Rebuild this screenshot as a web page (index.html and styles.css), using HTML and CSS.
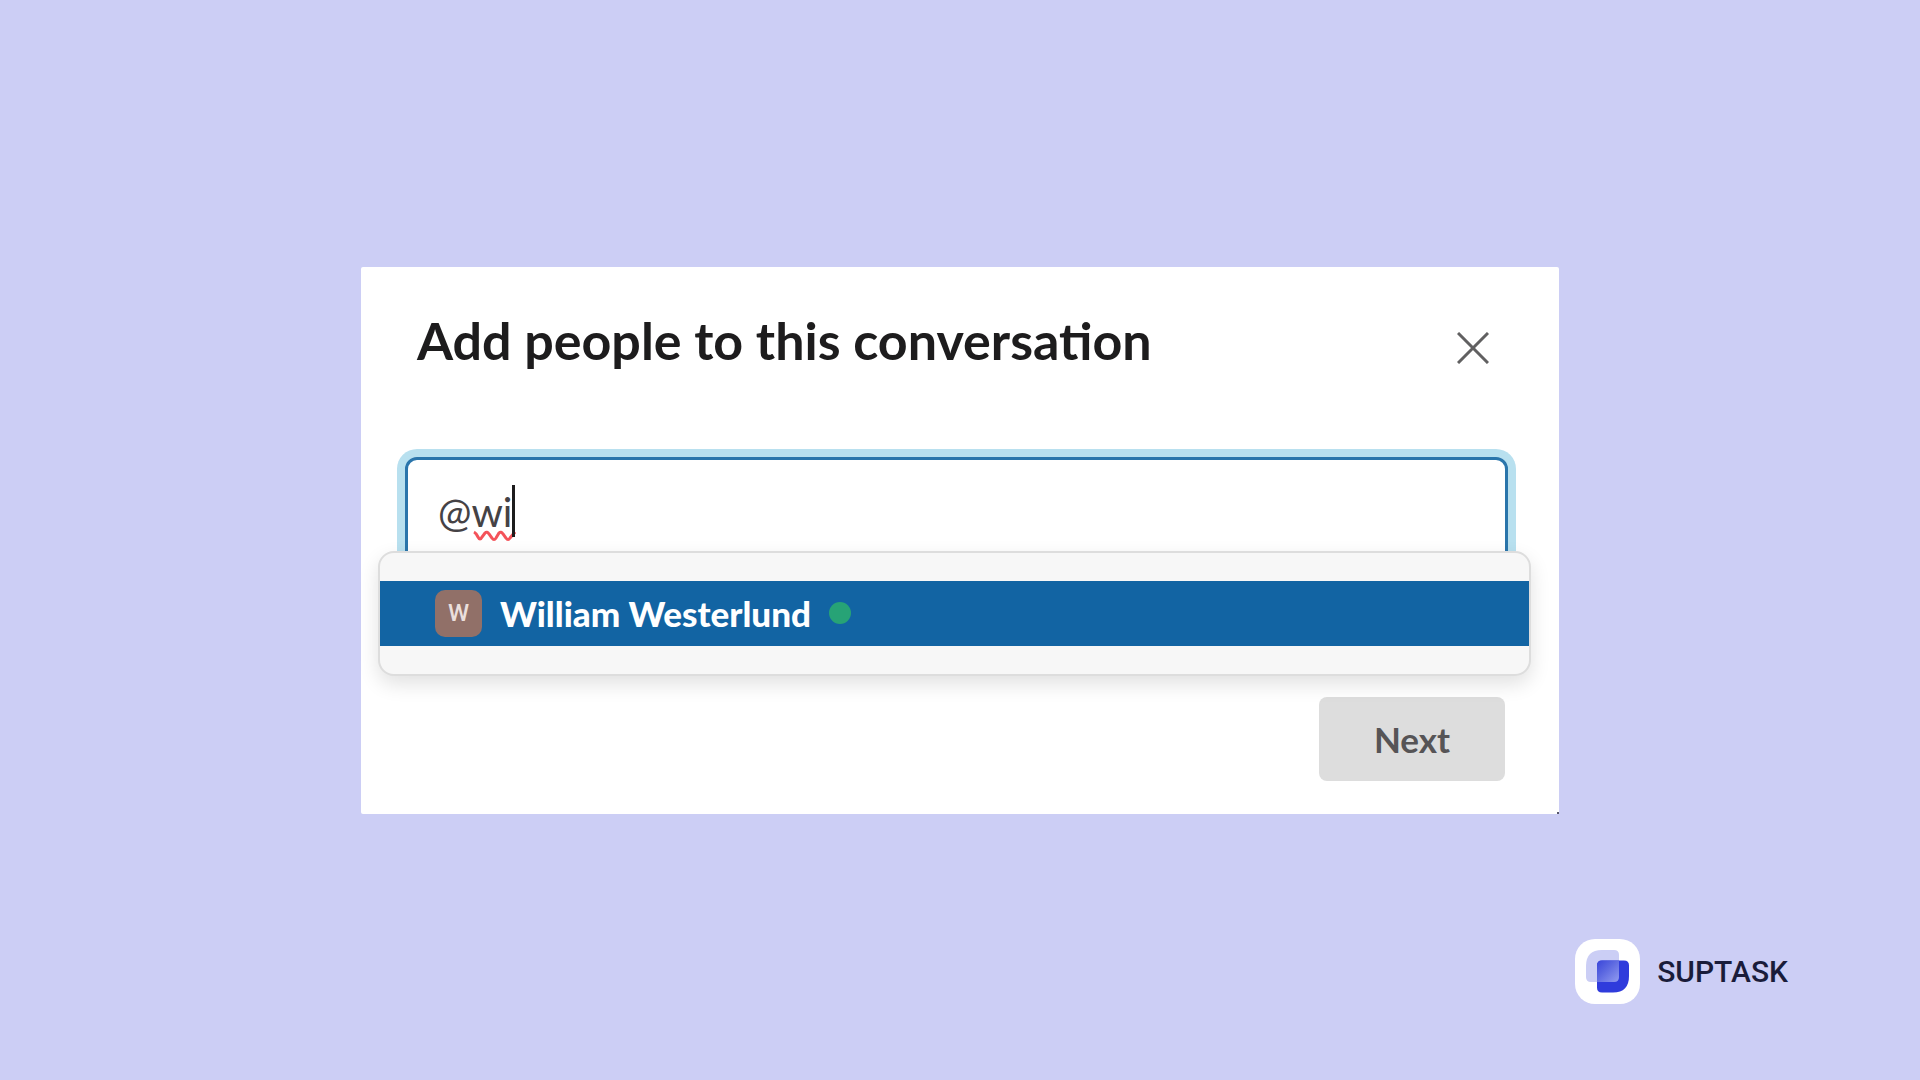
FILE: index.html
```html
<!DOCTYPE html>
<html lang="en">
<head>
  <meta charset="UTF-8" />
  <title>Add people to this conversation</title>
  <link rel="stylesheet" href="styles.css">
</head>
<body>
  <main class="dialog">
    <header class="dialog-header">
      <h1><label for="people">Add people to this conversation</label></h1>
      <button type="button" class="close-btn" aria-label="Close">
        <svg viewBox="0 0 32 32" width="32" height="32">
          <path d="M1 1 L31 31 M31 1 L1 31" />
        </svg>
      </button>
    </header>

    <div class="field">
      <input type="text" id="people" class="people-input" value="@wi" spellcheck="false" autocomplete="off" />
      <!-- spelling mark and text cursor -->
      <svg class="typo" viewBox="0 0 43 12" width="43" height="12">
        <path d="M1 2 Q3 3 5 7 Q7 11 9 7 L12 3 Q14 1 16 4 L19 8 Q21 11 23 8 L26 3 Q28 1 30 4 L33 8 Q35 11 37 8 L42 2" />
      </svg>
      <span class="cursor"></span>

      <ul class="suggestions">
        <li>
          <button type="button" class="person">
            <span class="avatar">W</span>
            <span class="name">William Westerlund</span>
            <span class="online"></span>
          </button>
        </li>
      </ul>
    </div>

    <div class="actions">
      <button type="button" class="next-btn">Next</button>
    </div>
  </main>

  <footer class="brand">
    <svg class="brand-logo" viewBox="0 0 65 65" width="65" height="65">
      <defs>
        <linearGradient id="glass" x1="0" y1="0" x2="1" y2="1">
          <stop offset="0" stop-color="#3a46da" />
          <stop offset="0.4" stop-color="#5a66e0" />
          <stop offset="1" stop-color="#929bf0" />
        </linearGradient>
      </defs>
      <rect width="65" height="65" rx="20" fill="#ffffff" />
      <path d="M27 11 H39 Q44 11 44 16 V43 H16 Q11 43 11 38 V27 Q11 11 27 11 Z" fill="#cbcef5" />
      <path d="M27 21.500 H49 Q54 21.500 54 26.500 V37 Q54 53.500 38 53.500 H27 Q22 53.500 22 48.500 V26.500 Q22 21.500 27 21.500 Z" fill="#2f3bdc" />
      <path d="M27 21.500 H44 V38 Q44 43 39 43 H22 V26.500 Q22 21.500 27 21.500 Z" fill="url(#glass)" />
    </svg>
    <span class="brand-name">SUPTASK</span>
  </footer>
</body>
</html>
```

FILE: styles.css
```css
* {
  box-sizing: border-box;
}

body {
  margin: 0;
  min-height: 100vh;
  display: grid;
  grid-template-rows: 1fr auto 1fr;
  justify-items: center;
  background: #cccef5;
  font-family: Lato, "Liberation Sans", sans-serif;
  color: #1d1c1d;
}

button {
  border: none;
  font-family: inherit;
  cursor: pointer;
}

/* Dialog */
.dialog {
  grid-row: 2;
  position: relative;
  width: 62.4%;
  padding: 43px 54px 33px 44px;
  background: #ffffff;
  border-radius: 2px;
}
.dialog::after {
  content: "";
  position: absolute;
  right: 0;
  bottom: 0;
  width: 2px;
  height: 2px;
  background: #55556a;
}

.dialog-header {
  display: flex;
  align-items: flex-end;
  justify-content: space-between;
  padding: 0 8px 0 12px;
  margin-bottom: 87px;
}
.dialog-header h1 {
  margin: 0;
  font-size: 52px;
  font-weight: bold;
  line-height: 60px;
}

.close-btn {
  display: flex;
  padding: 6px 8px;
  background: none;
}
.close-btn svg {
  fill: none;
  stroke: #616061;
  stroke-width: 3;
}

/* Text box with the list over its lower edge */
.field {
  position: relative;
  margin-right: -3px;
}

.people-input {
  display: block;
  width: 100%;
  height: 110px;
  padding: 0 30px;
  border: 3px solid #2a75ab;
  border-radius: 12px;
  outline: none;
  box-shadow: 0 0 0 8px #b8e0ef;
  background: #ffffff;
  font-family: inherit;
  font-size: 40px;
  color: #454245;
}

.typo {
  position: absolute;
  top: 73px;
  left: 68px;
  fill: none;
  stroke: #f4535a;
  stroke-width: 3;
}
.cursor {
  position: absolute;
  top: 28px;
  left: 107px;
  width: 3px;
  height: 52px;
  background: #1d1c1d;
}

.suggestions {
  position: absolute;
  top: 94px;
  left: -27px;
  right: -23px;
  margin: 0;
  padding: 28px 0;
  list-style: none;
  background: #f7f7f7;
  border: 2px solid #dddddd;
  border-radius: 16px;
  box-shadow: 0 8px 20px rgba(0, 0, 0, 0.12);
}

.person {
  display: flex;
  align-items: center;
  width: 100%;
  height: 65px;
  padding: 0 55px;
  background: #1264a3;
  color: #ffffff;
  font-size: 35px;
  font-weight: 900;
}
.avatar {
  width: 47px;
  height: 47px;
  margin-right: 18px;
  border-radius: 10px;
  background: #917068;
  color: #eadfdc;
  font-family: Roboto, sans-serif;
  font-size: 24px;
  font-weight: 500;
  line-height: 47px;
  text-align: center;
}
.online {
  width: 22px;
  height: 22px;
  margin-left: 18px;
  border-radius: 50%;
  background: #27a376;
}

.actions {
  display: flex;
  justify-content: flex-end;
  margin-top: 130px;
}
.next-btn {
  padding: 21px 55px;
  border-radius: 8px;
  background: #dddddd;
  color: #565456;
  font-size: 35px;
  font-weight: bold;
  line-height: 42px;
}

/* Brand */
.brand {
  grid-row: 3;
  justify-self: end;
  align-self: end;
  display: flex;
  align-items: center;
  gap: 17px;
  padding: 0 132px 76px 0;
}
.brand-name {
  font-family: Roboto, sans-serif;
  font-size: 30px;
  font-weight: 500;
  color: #1a1c3a;
}
```
